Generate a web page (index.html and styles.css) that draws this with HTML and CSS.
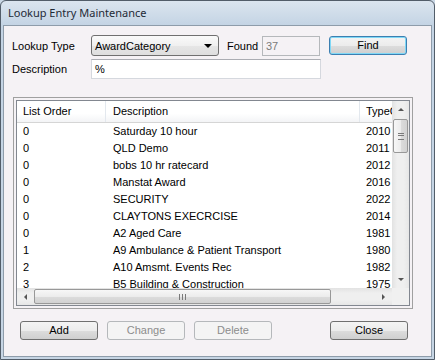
FILE: index.html
```html
<!DOCTYPE html>
<html>
<head>
  <title>Lookup Entry Maintenance</title>
  <link rel="stylesheet" href="styles.css">
</head>
<body>
  <div class="window">
    <div class="titlebar">Lookup Entry Maintenance</div>
    <div class="client">
      <div class="form-row">
        <span class="label">Lookup Type</span>
        <div class="combo">
          <span>AwardCategory</span>
          <span class="combo-arrow"></span>
        </div>
        <span class="found-label">Found</span>
        <div class="found-box">37</div>
        <div class="button default find">Find</div>
      </div>
      <div class="form-row second">
        <span class="label">Description</span>
        <div class="text-input">%</div>
      </div>

      <div class="frame">
        <div class="listview">
          <div class="list-content">
            <div class="list-header">
              <div class="col col-order">List Order</div>
              <div class="col col-desc">Description</div>
              <div class="col col-type">TypeCode</div>
            </div>
            <div class="list-rows" id="rows"></div>
          </div>
          <div class="vscroll">
            <div class="arrow-box"><span class="tri up"></span></div>
            <div class="vthumb"><span class="grip-v"></span></div>
            <div class="track-fill"></div>
            <div class="arrow-box"><span class="tri down"></span></div>
          </div>
          <div class="hscroll">
            <div class="arrow-box"><span class="tri left"></span></div>
            <div class="hthumb"><span class="grip-h"></span></div>
            <div class="track-fill"></div>
            <div class="arrow-box"><span class="tri right"></span></div>
          </div>
          <div class="corner"></div>
        </div>
      </div>

      <div class="button-row">
        <div class="button">Add</div>
        <div class="button disabled">Change</div>
        <div class="button disabled">Delete</div>
        <div class="button close">Close</div>
      </div>
    </div>
  </div>

  <script>
    // rows of the lookup list
    const rows = [
      ['0', 'Saturday 10 hour', '2010'],
      ['0', 'QLD Demo', '2011'],
      ['0', 'bobs 10 hr ratecard', '2012'],
      ['0', 'Manstat Award', '2016'],
      ['0', 'SECURITY', '2022'],
      ['0', 'CLAYTONS EXECRCISE', '2014'],
      ['0', 'A2 Aged Care', '1981'],
      ['1', 'A9 Ambulance & Patient Transport', '1980'],
      ['2', 'A10 Amsmt. Events Rec', '1982'],
      ['3', 'B5 Building & Construction', '1975']
    ];

    const list = document.getElementById('rows');
    rows.forEach(row => {
      const div = document.createElement('div');
      div.className = 'list-row';
      div.innerHTML =
        '<div class="col col-order"></div>' +
        '<div class="col col-desc"></div>' +
        '<div class="col col-type"></div>';
      const cols = div.querySelectorAll('.col');
      cols[0].textContent = row[0];
      cols[1].textContent = row[1];
      cols[2].textContent = row[2];
      list.appendChild(div);
    });
  </script>
</body>
</html>
```

FILE: styles.css
```css
body {
  margin: 0;
  font-family: 'Liberation Sans', Arial, sans-serif;
  font-size: 11px;
  color: #000;
  background-color: #c9d7e5;
}

.window {
  width: 435px;
  height: 360px;
  box-sizing: border-box;
  border: 1px solid #525d69;
  border-radius: 6px 6px 0 0;
  background: linear-gradient(#dbe5ef, #c4d4e4 24px, #c6d5e4);
  padding: 0 2px 2px 2px;
  display: flex;
  flex-direction: column;
  overflow: hidden;
}

.titlebar {
  height: 24px;
  line-height: 24px;
  padding-left: 5px;
  font-family: 'Noto Sans', sans-serif;
  font-size: 11px;
  color: #1e2a36;
  flex: none;
}

.client {
  flex: 1;
  border: 1px solid #8e9caa;
  background-color: #f5f2f5;
  padding: 9px 0 0 8px;
}

.form-row {
  display: flex;
  align-items: center;
  height: 21px;
}

.form-row.second {
  margin-top: 3px;
  height: 20px;
}

.label {
  width: 79px;
}

.combo {
  width: 128px;
  height: 21px;
  box-sizing: border-box;
  border: 1px solid #707070;
  border-radius: 3px;
  background: linear-gradient(#fafafa, #f0f0f0 50%, #e6e6e6 51%, #dedede);
  display: flex;
  align-items: center;
  justify-content: space-between;
  padding: 0 6px 0 3px;
}

.combo-arrow {
  width: 0;
  height: 0;
  border-left: 4px solid transparent;
  border-right: 4px solid transparent;
  border-top: 4px solid #000;
}

.found-label {
  margin-left: 8px;
  width: 35px;
}

.found-box {
  width: 58px;
  height: 20px;
  box-sizing: border-box;
  border: 1px solid #b5b8bb;
  color: #7a7a7a;
  padding-left: 3px;
  line-height: 18px;
}

.text-input {
  width: 230px;
  height: 20px;
  box-sizing: border-box;
  border: 1px solid #d5d8de;
  border-top-color: #abadb3;
  background-color: #fff;
  padding-left: 3px;
  line-height: 18px;
}

.button {
  width: 78px;
  height: 19px;
  box-sizing: border-box;
  border: 1px solid #707070;
  border-radius: 3px;
  background: linear-gradient(#f4f4f4, #ececec 50%, #dddddd 51%, #cfcfcf);
  text-align: center;
  line-height: 17px;
}

.button.default {
  border-color: #3c7fb1;
  box-shadow: inset 0 0 0 1px #80d8f6;
}

.button.disabled {
  border-color: #b5b8bb;
  background: #f4f4f4;
  color: #8c8c8c;
}

.find {
  margin-left: 9px;
}

.frame {
  margin: 18px 0 0 1px;
  width: 400px;
  height: 212px;
  box-sizing: border-box;
  border: 1px solid #a0a0a0;
  padding: 2px;
}

.listview {
  height: 100%;
  box-sizing: border-box;
  border: 1px solid #828790;
  background-color: #fff;
  display: grid;
  grid-template-columns: 1fr 17px;
  grid-template-rows: 1fr 17px;
}

.list-content {
  overflow: hidden;
}

.list-header {
  display: flex;
  height: 21px;
  border-bottom: 1px solid #d5d5d5;
  background: linear-gradient(#ffffff, #ffffff 60%, #f3f4f6);
  white-space: nowrap;
}

.list-header .col {
  line-height: 21px;
  border-right: 1px solid #e3e8ee;
}

.list-row {
  display: flex;
  height: 17px;
  line-height: 17px;
  white-space: nowrap;
}

.col {
  flex: none;
  overflow: hidden;
  box-sizing: border-box;
}

.col-order {
  width: 89px;
  padding-left: 6px;
}

.col-desc {
  width: 254px;
  padding-left: 7px;
}

.col-type {
  width: 60px;
  padding-left: 6px;
}

.vscroll,
.hscroll {
  display: flex;
  background: #eaeaea;
}

.vscroll {
  flex-direction: column;
  background: linear-gradient(90deg, #e2e2e2, #efefef 30%, #efefef 70%, #e6e6e6);
}

.hscroll {
  background: linear-gradient(#e2e2e2, #efefef 30%, #efefef 70%, #e6e6e6);
}

.arrow-box {
  width: 17px;
  height: 17px;
  flex: none;
  display: flex;
  align-items: center;
  justify-content: center;
}

.track-fill {
  flex: 1;
}

.tri {
  width: 0;
  height: 0;
}

.tri.up {
  border-left: 3px solid transparent;
  border-right: 3px solid transparent;
  border-bottom: 3px solid #555;
}

.tri.down {
  border-left: 3px solid transparent;
  border-right: 3px solid transparent;
  border-top: 3px solid #555;
}

.tri.left {
  border-top: 3px solid transparent;
  border-bottom: 3px solid transparent;
  border-right: 3px solid #555;
}

.tri.right {
  border-top: 3px solid transparent;
  border-bottom: 3px solid transparent;
  border-left: 3px solid #555;
}

.vthumb {
  margin: 1px 0 0 1px;
  width: 15px;
  height: 34px;
  box-sizing: border-box;
  border: 1px solid #989898;
  border-radius: 2px;
  background: linear-gradient(90deg, #f7f7f7, #ececec 50%, #dcdcdc 51%, #d2d2d2);
  display: flex;
  align-items: center;
  justify-content: center;
}

.grip-v {
  width: 6px;
  height: 5px;
  border-top: 1px solid #7a7a7a;
  border-bottom: 1px solid #7a7a7a;
  background: linear-gradient(transparent 1px, #7a7a7a 1px, #7a7a7a 2px, transparent 2px);
}

.hthumb {
  margin: 1px 0 0 0;
  width: 297px;
  height: 15px;
  box-sizing: border-box;
  border: 1px solid #989898;
  border-radius: 2px;
  background: linear-gradient(#f7f7f7, #ececec 50%, #dcdcdc 51%, #d2d2d2);
  display: flex;
  align-items: center;
  justify-content: center;
}

.grip-h {
  width: 5px;
  height: 6px;
  border-left: 1px solid #7a7a7a;
  border-right: 1px solid #7a7a7a;
  background: linear-gradient(90deg, transparent 2px, #7a7a7a 2px, #7a7a7a 3px, transparent 3px);
}

.corner {
  background-color: #f0f0f0;
}

.button-row {
  display: flex;
  margin: 12px 0 0 8px;
}

.button-row .button {
  margin-right: 9px;
}

.button-row .close {
  margin-left: 49px;
}
```
